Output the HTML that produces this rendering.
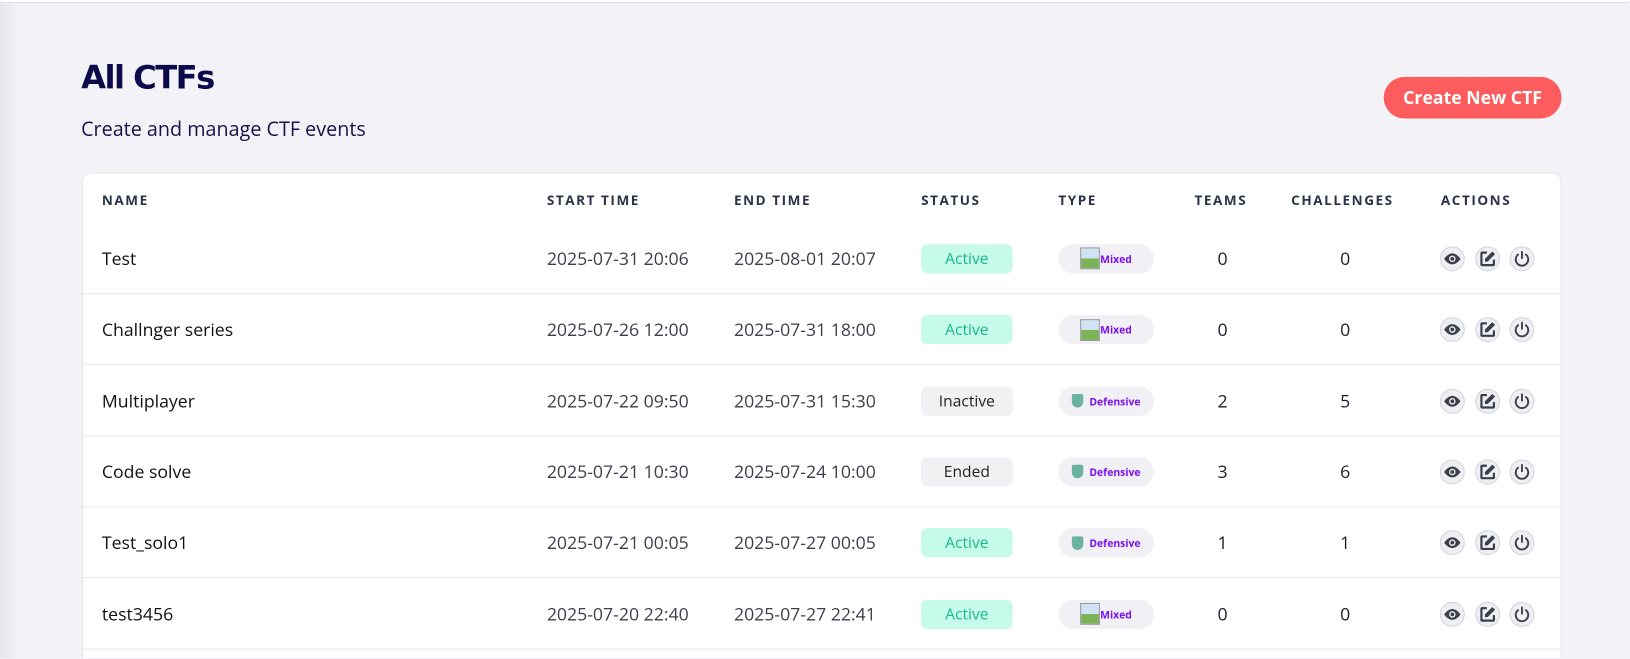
<!DOCTYPE html>
<html><head><meta charset="utf-8"><style>
*{margin:0;padding:0;box-sizing:border-box}
html{width:1630px;height:659px;overflow:hidden}
body{width:1630px;height:659px;background:#f3f2f7;font-family:"Open Sans","Liberation Sans",sans-serif;position:relative;overflow:hidden;color:#1b1b2b}
#w{position:absolute;left:0;top:0;width:1567px;height:633px;overflow:hidden;transform:scale(1.0396);transform-origin:0 0}
.top{position:absolute;left:0;top:0;width:1567px;height:3px;background:#fff;border-bottom:1px solid #dedde3}
.lshadow{position:absolute;left:0;top:4px;width:18px;height:629px;background:linear-gradient(90deg,#e6e5ea,#f3f2f7)}
h1{position:absolute;left:78px;top:57px;font-size:31px;font-weight:900;color:#0c0a4a;letter-spacing:-1.5px;font-family:"DejaVu Sans","Liberation Sans",sans-serif}
.sub{position:absolute;left:78px;top:111px;font-size:19px;color:#15134a}
.btn{position:absolute;left:1331px;top:74px;width:171px;height:40px;border-radius:20px;background:#fd5c5f;color:#fff;font-weight:700;font-size:17px;text-align:center;line-height:40px}
.card{position:absolute;left:79px;top:166px;width:1423px;height:467px;background:#fff;border-radius:8px 8px 0 0;border:1px solid #e6e5ea;border-bottom:none}
.th{position:absolute;top:183px;font-size:13px;font-weight:700;letter-spacing:1.5px;color:#2c3344}
.row{position:absolute;left:80px;width:1421px;height:68px;border-bottom:1px solid #e9e8ee}
.c{position:absolute;top:0;line-height:68px;font-size:17px}
.name{left:18px;color:#111}
.d{color:#3a3f4c}
.st{position:absolute;left:806px;top:20px;width:88px;height:28px;border-radius:6px;text-align:center;line-height:28px;font-size:15px}
.act{background:#c6fbea;color:#18b889}.ina{background:#f1f1f4;color:#222}
.ty{position:absolute;left:938px;top:20px;width:92px;height:28px;border-radius:14px;background:#f1f1f5;font-size:10px;font-weight:700;color:#7a10f0;line-height:28px;text-align:center}
.num{width:40px;text-align:center}
.ic{position:absolute;top:22px;width:24px;height:24px;border-radius:50%;background:#eeeef3;border:1px solid #d4d4de}
.ic svg{position:absolute;left:2px;top:2px}
</style></head><body>
<div id="w">
<div class="top"></div><div class="lshadow"></div>
<h1>All CTFs</h1>
<div class="sub">Create and manage CTF events</div>
<div class="btn">Create New CTF</div>
<div class="card"></div>
<div class="th" style="left:98px">NAME</div>
<div class="th" style="left:526px">START TIME</div>
<div class="th" style="left:706px">END TIME</div>
<div class="th" style="left:886px">STATUS</div>
<div class="th" style="left:1018px">TYPE</div>
<div class="th" style="left:1149px">TEAMS</div>
<div class="th" style="left:1242px">CHALLENGES</div>
<div class="th" style="left:1386px">ACTIONS</div>
<div id="rows"></div>
</div>
<script>
var data=[["Test","2025-07-31 20:06","2025-08-01 20:07","Active","Mixed",0,0],
["Challnger series","2025-07-26 12:00","2025-07-31 18:00","Active","Mixed",0,0],
["Multiplayer","2025-07-22 09:50","2025-07-31 15:30","Inactive","Defensive",2,5],
["Code solve","2025-07-21 10:30","2025-07-24 10:00","Ended","Defensive",3,6],
["Test_solo1","2025-07-21 00:05","2025-07-27 00:05","Active","Defensive",1,1],
["test3456","2025-07-20 22:40","2025-07-27 22:41","Active","Mixed",0,0]];
var eye='<svg width="18" height="18" viewBox="0 0 24 24"><path d="M12 5C6 5 1.5 12 1.5 12s4.5 7 10.5 7 10.5-7 10.5-7-4.5-7-10.5-7z" fill="#3b3f4b"/><circle cx="12" cy="12" r="4.2" fill="#eee"/><circle cx="12" cy="12" r="2.4" fill="#3b3f4b"/></svg>';
var ed='<svg width="18" height="18" viewBox="0 0 24 24"><path d="M11 4H5a1 1 0 0 0-1 1v14a1 1 0 0 0 1 1h14a1 1 0 0 0 1-1v-6" fill="none" stroke="#3b3f4b" stroke-width="2.8"/><path d="M18 2.5l3.5 3.5-9.5 9.5H8.5V12z" fill="#3b3f4b"/></svg>';
var pw='<svg width="18" height="18" viewBox="0 0 24 24"><path d="M7 6.5a8 8 0 1 0 10 0" fill="none" stroke="#3b3f4b" stroke-width="2.4" stroke-linecap="round"/><path d="M12 3v8" stroke="#3b3f4b" stroke-width="2.4" stroke-linecap="round"/></svg>';
var h='';
data.forEach(function(r,i){
var top=215+i*68.3;
var img=r[4]=="Mixed"?'<span style="display:inline-block;width:19px;height:21px;border:1px solid #999;background:linear-gradient(#cfe3f5 50%,#7bb257 50%);vertical-align:middle;margin-top:-3px"></span>':'<span style="display:inline-block;width:11px;height:13px;border-radius:2px 2px 6px 6px;background:#6bb3a0;vertical-align:middle;margin-right:6px;margin-top:-3px"></span>';
h+='<div class="row" style="top:'+top+'px">'+
'<div class="c name">'+r[0]+'</div>'+
'<div class="c d" style="left:446px">'+r[1]+'</div>'+
'<div class="c d" style="left:626px">'+r[2]+'</div>'+
'<div class="st '+(r[3]=="Active"?"act":"ina")+'">'+r[3]+'</div>'+
'<div class="ty">'+img+r[4]+'</div>'+
'<div class="c num" style="left:1076px">'+r[5]+'</div>'+
'<div class="c num" style="left:1194px">'+r[6]+'</div>'+
'<div class="ic" style="left:1305px">'+eye+'</div>'+
'<div class="ic" style="left:1339px">'+ed+'</div>'+
'<div class="ic" style="left:1372px">'+pw+'</div>'+
'</div>';});
document.getElementById('rows').innerHTML=h;
</script>
</body></html>
